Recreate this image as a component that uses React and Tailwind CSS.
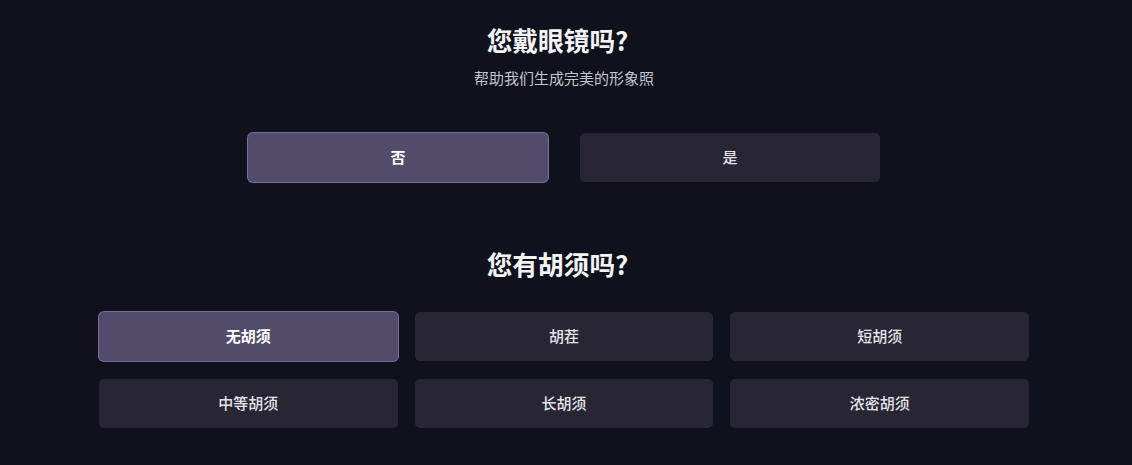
import React, { useState } from "react";

const font = { fontFamily: '"Noto Sans CJK SC", "Noto Sans", sans-serif' };

function Opt({ label, selected, onClick }) {
  return (
    <button
      onClick={onClick}
      className={
        "h-[49px] rounded-[5px] flex items-center justify-center text-[15px] " +
        (selected
          ? "bg-[#524c6a] ring-1 ring-[#77709a] text-white font-bold"
          : "bg-[#282634] text-[#e4e4ea] font-medium")
      }
    >
      {label}
    </button>
  );
}

export default function App() {
  const [glasses, setGlasses] = useState("否");
  const [beard, setBeard] = useState("无胡须");
  return (
    <div className="min-h-[465px] w-full bg-[#0f121c] pr-1" style={font}>
      <div className="flex flex-col items-center pt-6">
        <h1 className="pr-[13px] text-[25.7px] leading-8 font-bold text-[#f3f3f6]">您戴眼镜吗?</h1>
        <p className="mt-3 text-[15px] leading-5 text-[#c6c6ce]">帮助我们生成完美的形象照</p>
        <div className="mt-[45px] grid w-[632px] grid-cols-2 gap-8">
          {["否", "是"].map((l) => (
            <Opt key={l} label={l} selected={glasses === l} onClick={() => setGlasses(l)} />
          ))}
        </div>
        <h2 className="mt-[66px] pr-[13px] text-[25.7px] leading-8 font-bold text-[#f3f3f6]">您有胡须吗?</h2>
        <div className="mt-[32px] grid w-[930px] grid-cols-3 gap-x-[17px] gap-y-[18px]">
          {["无胡须", "胡茬", "短胡须", "中等胡须", "长胡须", "浓密胡须"].map((l) => (
            <Opt key={l} label={l} selected={beard === l} onClick={() => setBeard(l)} />
          ))}
        </div>
      </div>
    </div>
  );
}
